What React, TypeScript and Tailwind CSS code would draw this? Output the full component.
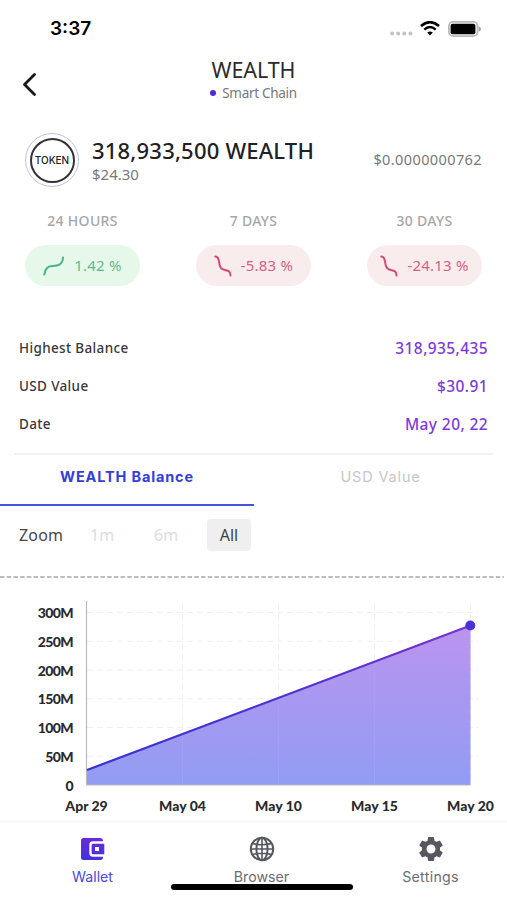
import { MdSettings } from "react-icons/md";

const changes = [
  { label: "24 HOURS", value: "1.42 %", up: true },
  { label: "7 DAYS", value: "-5.83 %", up: false },
  { label: "30 DAYS", value: "-24.13 %", up: false },
];

const stats = [
  { label: "Highest Balance", value: "318,935,435" },
  { label: "USD Value", value: "$30.91" },
  { label: "Date", value: "May 20, 22" },
];

const yTicks = ["300M", "250M", "200M", "150M", "100M", "50M", "0"];
const xTicks = ["Apr 29", "May 04", "May 10", "May 15", "May 20"];

function StatusBar() {
  return (
    <div className="flex h-[57px] items-center justify-between pl-[50px] pr-[26px] font-['Inter',sans-serif]">
      <span className="pt-[2px] text-[19px] font-semibold text-black">3:37</span>
      <div className="flex items-center">
        <svg width="23" height="5" viewBox="0 0 23 5" fill="#c3c3c5" className="mr-[7px] mt-[9px]">
          {[2.1, 8.2, 14.3, 20.4].map((x) => <circle key={x} cx={x} cy="2.5" r="2" />)}
        </svg>
        <svg width="20" height="15" viewBox="0 0 20 15" className="mr-2">
          <path d="M1 5Q10-2.8 19 5M4.3 8.6Q10 3.5 15.7 8.6" fill="none" stroke="#000" strokeWidth="2.5" />
          <path d="M7.2 11.6Q10 9.4 12.8 11.6L10 14.5Z" />
        </svg>
        <svg width="33" height="16" viewBox="0 0 33 16">
          <rect x="0.9" y="0.9" width="28.6" height="14.2" rx="4.2" fill="#fff" stroke="#b9b9b9" strokeWidth="1.8" />
          <rect x="2.6" y="2.8" width="24.8" height="10.4" rx="2" />
          <path d="M30.8 5.2Q33 6.3 33 8T30.8 10.8Z" fill="#a0a0a0" />
        </svg>
      </div>
    </div>
  );
}

function Header() {
  return (
    <header className="flex h-[55px] items-start justify-between px-[22px]">
      <svg width="15" height="25" viewBox="0 0 15 25" className="mt-[15px]">
        <path d="M12.5 2.5L2.5 12.5L12.5 22.5" fill="none" stroke="#17171a" strokeWidth="2.8" strokeLinecap="round" strokeLinejoin="round" />
      </svg>
      <div className="flex flex-col items-center">
        <h1 className="text-[21.5px] leading-[26px] tracking-[-0.1px] text-[#2b2b2e]">WEALTH</h1>
        <div className="flex items-center gap-1.5 text-[13.5px] leading-5 tracking-[-0.3px] text-[#77787c]">
          <span className="size-1.5 rounded-full bg-[#4b2be0]" />
          Smart Chain
        </div>
      </div>
      <div className="w-[15px]" />
    </header>
  );
}

function Trend({ up }: { up: boolean }) {
  return up ? (
    <svg width="22" height="20" viewBox="0 0 22 20" fill="none" stroke="#4cb088" strokeWidth="2" strokeLinecap="round">
      <path d="M1.3 18.5C2 13 4.5 10.3 9 10S19.5 10 20 1.5" />
    </svg>
  ) : (
    <svg width="18" height="22" viewBox="0 0 18 22" fill="none" stroke="#d04a78" strokeWidth="2" strokeLinecap="round">
      <path d="M1.3 1.5C7 2 3.5 9 7 13S16 13 16.5 20.5" />
    </svg>
  );
}

function Chart() {
  return (
    <svg width="507" height="242" viewBox="0 578 507 242" className="block font-['Lato',sans-serif] text-[14.5px] font-black" fill="#2b2b2e">
      <defs>
        <linearGradient id="area" x1="0" y1="0" x2="0" y2="1">
          <stop offset="0" stopColor="#bb94ef" />
          <stop offset="1" stopColor="#919cf3" />
        </linearGradient>
        <linearGradient id="line" x1="0" y1="0" x2="1" y2="0">
          <stop offset="0" stopColor="#3932cf" />
          <stop offset="0.55" stopColor="#5032cf" />
          <stop offset="1" stopColor="#7834c9" />
        </linearGradient>
      </defs>
      <g stroke="#f0f0f2" strokeDasharray="6 4">
        {yTicks.slice(0, 6).map((t, i) => <path key={t} d={`M87 ${612.5 + i * 28.75}H478`} />)}
        {xTicks.slice(1).map((t, i) => <path key={t} d={`M${182.5 + i * 96} 604V785`} />)}
      </g>
      <path d="M87 770L470.5 625.5V785H87Z" fill="url(#area)" />
      <path d="M182.5 735V785M278.5 699V785M374.5 663V785" stroke="#a9a3ef" strokeOpacity="0.6" />
      <path d="M86.5 601V785H470" fill="none" stroke="#b9b9be" strokeWidth="1.2" />
      <path d="M87 770L470.5 625.5" stroke="url(#line)" strokeWidth="2.2" />
      <circle cx="470.3" cy="625.5" r="5" fill="#4a32d4" />
      {yTicks.map((t, i) => <text key={t} x="73" y={618 + i * 28.75} textAnchor="end" fontSize="14" letterSpacing="-0.6">{t}</text>)}
      {xTicks.map((t, i) => <text key={t} x={86.5 + i * 96} y="811" textAnchor="middle" fontSize="14" letterSpacing="0">{t}</text>)}
    </svg>
  );
}

function WalletIcon() {
  return (
    <svg width="25" height="24" viewBox="0 0 25 24">
      <defs>
        <linearGradient id="wallet" x1="0.3" y1="0" x2="0.2" y2="1">
          <stop offset="0" stopColor="#6a2bd9" />
          <stop offset="1" stopColor="#4330e0" />
        </linearGradient>
      </defs>
      <path fill="url(#wallet)" d="M3.5 1H20.5Q22.8 1 23 3.5V4.3H13Q9.3 4.3 9.3 8V16Q9.3 19.7 13 19.7H23V20.5Q22.8 23 20.5 23H3.5Q1 23 1 20.5V3.5Q1 1 3.5 1ZM13 6.8H24.3V17.2H13Q11.6 17.2 11.6 15.7V8.3Q11.6 6.8 13 6.8ZM15 10V14H19V10Z" fillRule="evenodd" />
    </svg>
  );
}

function GlobeIcon() {
  return (
    <svg width="26" height="26" viewBox="0 0 26 26" fill="none" stroke="#55585f" strokeWidth="2">
      <circle cx="13" cy="13" r="11.2" />
      <ellipse cx="13" cy="13" rx="5.6" ry="11.2" />
      <path d="M13 2V24M2 13H24M4 7.6Q13 9.8 22 7.6M4 18.4Q13 16.2 22 18.4" strokeWidth="1.6" />
    </svg>
  );
}

export default function App() {
  return (
    <div className="relative flex h-[900px] w-[507px] flex-col overflow-hidden bg-white font-['Noto_Sans',sans-serif]">
      <StatusBar />
      <Header />

      <section className="flex h-24 items-center pl-[25px] pr-[25px]">
        <div className="flex size-[54px] shrink-0 items-center justify-center rounded-full border-[1.5px] border-[#bcc2e4]">
          <div className="flex size-[45px] items-center justify-center rounded-full border-2 border-[#333] font-['Inter',sans-serif] text-[10px] font-medium text-[#222]">TOKEN</div>
        </div>
        <div className="ml-[13px] flex-1">
          <div className="whitespace-nowrap pt-px text-[22px] font-medium leading-[27px] tracking-[0.2px] text-[#212124]">318,933,500 WEALTH</div>
          <div className="text-[15px] leading-[21px] text-[#77787c]">$24.30</div>
        </div>
        <div className="text-[14.5px] tracking-[0.4px] text-[#77787c]">$0.0000000762</div>
      </section>

      <section className="flex justify-between pl-[25px] pr-[25px]">
        {changes.map((c) => (
          <div key={c.label} className="flex w-[115px] flex-col items-center">
            <div className="h-[37px] pt-[3px] text-[14px] font-medium leading-5 tracking-[0.3px] text-[#a6a6a8]">{c.label}</div>
            <div className={c.up
              ? "flex h-[41px] w-full items-center justify-center gap-[9px] rounded-full bg-[#e6f8e9] text-[15px] tracking-[0.2px] text-[#62b894]"
              : "flex h-[41px] w-full items-center justify-center gap-[9px] rounded-full bg-[#f9eced] text-[15px] tracking-[0.2px] text-[#d65f85]"}
            >
              <Trend up={c.up} />
              <span className="whitespace-nowrap">{c.value}</span>
            </div>
          </div>
        ))}
      </section>

      <section className="mx-3.5 mt-[43px] h-[126px] border-b-2 border-[#f1f1f2]">
        {stats.map((s) => (
          <div key={s.label} className="flex h-[38px] items-center justify-between pl-[5px] pr-[5px]">
            <span className="text-[13.5px] font-medium tracking-[0.35px] text-[#39393c]">{s.label}</span>
            <span className="pt-[2px] text-[15.5px] font-medium tracking-[0.4px] text-[#7d3bd6]">{s.value}</span>
          </div>
        ))}
      </section>

      <div className="flex h-[51px] shrink-0 font-['Inter',sans-serif] text-[14.5px] tracking-[0.85px]">
        <div className="w-[254px] border-b-2 border-[#4254dc] pt-[11px] text-center font-bold leading-[22px] text-[#3440d4]">WEALTH Balance</div>
        <div className="flex-1 pt-[11px] text-center leading-[22px] text-[#c5c7c9]">USD Value</div>
      </div>

      <div className="flex h-[70px] shrink-0 items-start pl-[19px] pt-[13px] text-[16px] leading-8">
        <span className="w-[71px] tracking-[0.2px] text-[#47474a]">Zoom</span>
        <span className="w-16 text-[#dcdcde]">1m</span>
        <span className="w-[53px] text-[#dcdcde]">6m</span>
        <span className="w-[44px] rounded bg-[#efefef] text-center text-[#414144]">All</span>
      </div>
      <svg width="507" height="2" className="block shrink-0">
        <path d="M0 1H504" stroke="#bdbdbf" strokeWidth="2" strokeDasharray="4.5 2.2" />
      </svg>

      <Chart />

      <nav className="flex flex-1 items-start border-t-[3px] border-[#f8f8f9] pl-2 font-['Inter',sans-serif] text-[14.2px] leading-[21px] text-[#6b6c72]">
        <div className="flex w-[169px] shrink-0 flex-col items-center pt-[11px] text-[#4a4ad8]">
          <div className="flex h-8 items-start pt-[3px]"><WalletIcon /></div>
          <span>Wallet</span>
        </div>
        <div className="flex w-[169px] shrink-0 flex-col items-center pt-[11px]">
          <div className="flex h-8 items-start pt-0.5"><GlobeIcon /></div>
          <span>Browser</span>
        </div>
        <div className="flex w-[169px] shrink-0 flex-col items-center pt-[11px]">
          <div className="flex h-8 items-start"><MdSettings size={30} color="#55585f" /></div>
          <span className="tracking-[0.3px]">Settings</span>
        </div>
      </nav>
      <div className="absolute bottom-[10px] left-[171px] h-1.5 w-[182px] rounded-full bg-black" />
    </div>
  );
}
